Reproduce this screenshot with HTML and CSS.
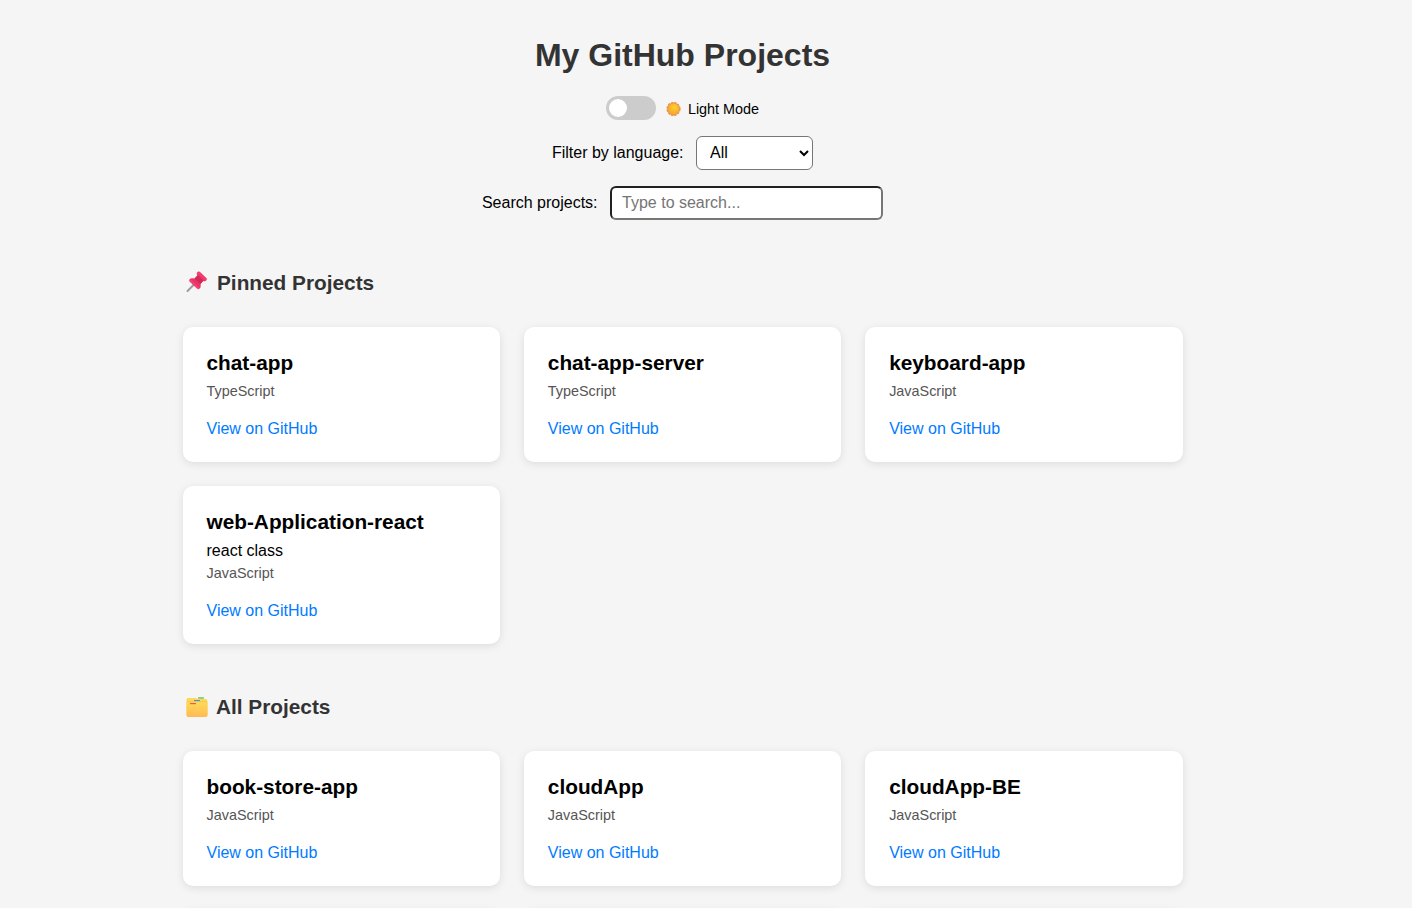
FILE: index.html
```html
<!DOCTYPE html>
<html lang="en">
<head>
<meta charset="utf-8">
<title>My GitHub Projects</title>
<link rel="stylesheet" href="styles.css">
</head>
<body>
<main class="page">
  <h1 class="title">My GitHub Projects</h1>
  <div class="mode">
    <span class="switch"><span class="knob"></span></span>
    <svg class="sun" viewBox="0 0 16 16">
      <defs><radialGradient id="sun-fill" cx=".6" cy=".35" r=".7"><stop offset="0" stop-color="#fdd02f"/><stop offset="1" stop-color="#f3a432"/></radialGradient></defs>
      <circle cx="7.500" cy="8" r="6.400" fill="none" stroke="#f08a45" stroke-width="1.300" stroke-dasharray="2.300 1.050"/>
      <circle cx="7.500" cy="8" r="6.400" fill="#ee9640"/>
      <circle cx="7.500" cy="8" r="5.500" fill="url(#sun-fill)"/>
    </svg>
    <span class="mode-label">Light Mode</span>
  </div>
  <div class="field">
    <label for="language">Filter by language:</label>
    <select id="language" class="select"><option>All</option><option>JavaScript</option><option>TypeScript</option></select>
  </div>
  <div class="field">
    <label for="search">Search projects:</label>
    <input id="search" class="search" type="text" placeholder="Type to search...">
  </div>

  <section class="section">
    <h2 class="heading">
      <svg class="emoji" viewBox="0 0 22 22">
        <path d="M8 13.500 1.500 20" stroke="#9b9ba3" stroke-width="2" stroke-linecap="round"/>
        <path d="M11.500 1.300c.8-.9 1.800-.7 2.500 0l6 5.700c.8.800.8 1.700 0 2.400-.8.700-1.900.700-2.900.400L14.300 13c.4 1.800.2 3.700-.9 4.500-.8.600-1.700.4-2.400-.2L4.100 10.800c-.8-.8-.9-1.700-.2-2.500 1-1 2.900-1.100 4.500-.6l3-3.300c-.4-1.100-.5-2.100.1-3.100z" fill="#ea3464" stroke="#ea3464" stroke-width=".5"/>
        <path d="m8.800 7.700 3.100-3.300 5.400 5.400-3 3.200z" fill="#cf2a5b"/>
        <path d="m4.600 9.300 7.800 7.500M12.700 2l7 6.700" stroke="#fa4272" stroke-width="1.400" stroke-linecap="round"/>
      </svg>
      <span>Pinned Projects</span>
    </h2>
    <div class="grid">
      <article class="card"><h3 class="name">chat-app</h3><p class="lang">TypeScript</p><a class="link">View on GitHub</a></article>
      <article class="card"><h3 class="name">chat-app-server</h3><p class="lang">TypeScript</p><a class="link">View on GitHub</a></article>
      <article class="card"><h3 class="name">keyboard-app</h3><p class="lang">JavaScript</p><a class="link">View on GitHub</a></article>
      <article class="card"><h3 class="name">web-Application-react</h3><p class="desc">react class</p><p class="lang">JavaScript</p><a class="link">View on GitHub</a></article>
    </div>
  </section>

  <section class="section">
    <h2 class="heading all">
      <svg class="emoji" viewBox="0 0 22 22">
        <defs><linearGradient id="folder-fill" x2="0" y2="1"><stop offset="0" stop-color="#ffda57"/><stop offset="1" stop-color="#ffb954"/></linearGradient></defs>
        <rect x="12" y="1" width="6" height="4" rx=".6" fill="#91d187"/>
        <path d="M2 2h8l2 1h7.500a2 2 0 0 1 2 2v14a2 2 0 0 1-2 2h-17a2 2 0 0 1-2-2V3.500A1.500 1.500 0 0 1 2 2z" fill="#ffd65b"/>
        <rect x="8" y="4" width="6" height="1.200" fill="#4593dd"/>
        <path d="M.5 6.200h21V19a2 2 0 0 1-2 2h-17a2 2 0 0 1-2-2z" fill="url(#folder-fill)"/>
        <path d="M1 5.700h20" stroke="#f5bd44" stroke-width=".5"/>
        <rect x="4" y="7" width="6" height="1.200" fill="#ed5a46"/>
      </svg>
      <span>All Projects</span>
    </h2>
    <div class="grid">
      <article class="card"><h3 class="name">book-store-app</h3><p class="lang">JavaScript</p><a class="link">View on GitHub</a></article>
      <article class="card"><h3 class="name">cloudApp</h3><p class="lang">JavaScript</p><a class="link">View on GitHub</a></article>
      <article class="card"><h3 class="name">cloudApp-BE</h3><p class="lang">JavaScript</p><a class="link">View on GitHub</a></article>
      <article class="card"></article>
      <article class="card"></article>
      <article class="card"></article>
    </div>
  </section>
</main>
</body>
</html>
```
FILE: styles.css
```css
* { box-sizing: border-box; }
body {
  margin: 0;
  height: 908px;
  overflow: hidden;
  background: #f5f5f5;
  color: #000;
  font: 16px "Liberation Sans", Arial, sans-serif;
}
h1, h2, h3, p { margin: 0; }
.page { width: 1365px; height: 908px; overflow: hidden; padding: 37px 182.5px 0; }
.title { height: 37px; color: #333; font-size: 32px; line-height: 37px; text-align: center; }
.mode { display: flex; justify-content: center; align-items: center; height: 24px; margin-top: 22px; font-size: 14.4px; }
.switch { width: 50px; height: 24px; padding: 3px; border-radius: 12px; background: #ccc; }
.knob { display: block; width: 18px; height: 18px; border-radius: 50%; background: #fff; }
.sun { width: 16px; height: 16px; margin: 2px 6px 0 10px; }
.mode-label { margin-top: 2px; line-height: 16px; }
.field { display: flex; justify-content: center; align-items: center; gap: 12.5px; height: 34px; margin-top: 16px; }
.select {
  width: 117px;
  height: 34px;
  padding: 0 9px 2px;
  border: 1px solid #767676;
  border-radius: 6px;
  background-color: #fff;
  color: #000;
  font: 16px "Liberation Sans", Arial, sans-serif;
}
.search {
  width: 273px;
  height: 34px;
  padding: 0 10px;
  border: 2px inset #767676;
  border-radius: 6px;
  background: #fff;
  font: 16px "Liberation Sans", Arial, sans-serif;
}
.search::placeholder { color: #757575; }
.section { margin-bottom: 51px; }
.field + .section { margin-top: 51px; }
.heading { display: flex; align-items: center; gap: 9px; height: 24px; margin-bottom: 32px; padding-left: 3.5px; color: #333; font-size: 20.8px; line-height: 24px; }
.heading.all { gap: 8px; }
.emoji { width: 22px; height: 22px; margin-bottom: 2px; fill: none; }
.all .emoji { margin-bottom: 0; }
.grid { display: grid; grid-template-columns: repeat(3, 1fr); gap: 24px; }
.card { min-height: 135px; padding: 24px; border-radius: 10px; background: #fff; box-shadow: 0 2px 8px rgba(0, 0, 0, 0.1); }
.name { margin-bottom: 8px; font-size: 20.8px; line-height: 24px; }
.desc { margin-bottom: 5px; line-height: 18px; }
.lang { margin-bottom: 21px; color: #555; font-size: 14.4px; line-height: 16px; }
.link { display: block; height: 18px; color: #007bff; line-height: 18px; }
```
